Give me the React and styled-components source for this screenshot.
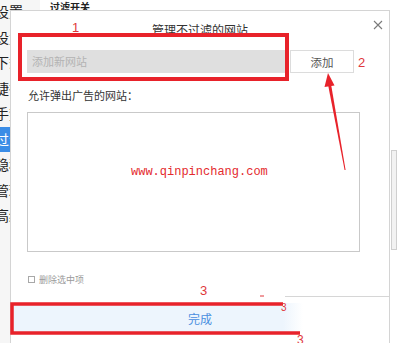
import React from "react";
import styled, { createGlobalStyle } from "styled-components";

const GlobalStyle = createGlobalStyle`
  html, body {
    margin: 0;
    padding: 0;
    background: #ffffff;
    overflow: hidden;
  }
  body {
    font-family: "Noto Sans CJK SC", "Noto Sans", sans-serif;
  }
`;

const Page = styled.div`
  position: relative;
  display: flex;
  width: 400px;
  height: 343px;
  overflow: hidden;
  background: #ffffff;
`;

const Sidebar = styled.ul`
  list-style: none;
  margin: -1px 0 0 -5px;
  padding: 0;
  width: 45px;
  background: #f6f6f6;
`;

const NavItem = styled.li`
  height: 25.5px;
  line-height: 25.5px;
  font-size: 14px;
  white-space: nowrap;
  color: ${(p) => (p.$active ? "#ffffff" : "#222222")};
  background: ${(p) => (p.$active ? "#3b8de6" : "transparent")};
`;

const Main = styled.div`
  flex: 1;
  display: flex;
`;

const MainContent = styled.div`
  flex: 1;
`;

const Heading = styled.div`
  padding: 1px 0 0 10px;
  font-size: 10px;
  font-weight: 700;
  line-height: 12px;
  color: #222222;
`;

const ScrollRail = styled.div`
  width: 10px;
  padding: 150px 0 0 1px;
  box-sizing: border-box;
`;

const ScrollThumb = styled.div`
  width: 6px;
  height: 100px;
  border: 1px solid #cfcfcf;
  background: #f2f2f2;
  box-sizing: border-box;
`;

const Dialog = styled.div`
  position: absolute;
  left: 10px;
  top: 10px;
  width: 380px;
  bottom: -2px;
  display: flex;
  flex-direction: column;
  background: #ffffff;
  border: 1px solid #d4d4d4;
  box-sizing: border-box;
`;

const Header = styled.div`
  display: grid;
  grid-template-columns: 1fr auto 1fr;
  height: 34px;
  align-items: center;
`;

const Title = styled.div`
  grid-column: 2;
  font-size: 12px;
  color: #333333;
  padding-top: 2px;
`;

const CloseButton = styled.button`
  grid-column: 3;
  justify-self: end;
  align-self: start;
  margin: 9px 6px 0 0;
  padding: 0;
  width: 10px;
  height: 10px;
  border: none;
  background: none;
  display: flex;
`;

const InputRow = styled.div`
  display: flex;
  gap: 5px;
  margin: 5px 0 0 16px;
  height: 23px;
`;

const UrlInput = styled.input`
  width: 258px;
  height: 23px;
  box-sizing: border-box;
  border: none;
  background: #dfdfdf;
  padding: 0 0 1px 5px;
  font-family: inherit;
  font-size: 11px;
  color: #333;
  outline: none;
  &::placeholder {
    color: #b3b3b3;
  }
`;

const AddButton = styled.button`
  width: 64px;
  height: 23px;
  box-sizing: border-box;
  border: 1px solid #dcdcdc;
  background: #ffffff;
  font-family: inherit;
  font-size: 11.5px;
  color: #555555;
  padding: 0;
`;

const Label = styled.div`
  margin: 14px 0 0 17px;
  font-size: 11px;
  line-height: 16px;
  color: #333333;
`;

const SiteList = styled.div`
  margin: 9px 0 0 16px;
  width: 333px;
  height: 140px;
  box-sizing: border-box;
  border: 1px solid #c9c9c9;
`;

const DeleteRow = styled.label`
  display: flex;
  align-items: center;
  gap: 4px;
  margin: 21px 0 0 17px;
  height: 12px;
  font-size: 9px;
  color: #9a9a9a;
`;

const Check = styled.span`
  width: 5px;
  height: 5px;
  border: 1px solid #a8a8a8;
`;

const Separator = styled.div`
  margin: 11px 0 0 auto;
  width: 104px;
  height: 1px;
  background: #d6d6d6;
`;

const DoneButton = styled.button`
  margin-top: 6px;
  height: 30px;
  border: none;
  padding: 0;
  font-family: inherit;
  font-size: 12px;
  color: #4a8fe0;
  background: linear-gradient(to right, #edf5fd 0, #edf5fd 272px, #ffffff 292px);
`;

const Marks = styled.svg`
  position: absolute;
  left: 0;
  top: 0;
  pointer-events: none;
`;

const Num = styled.span`
  position: absolute;
  left: ${(p) => p.$x}px;
  top: ${(p) => p.$y}px;
  font-family: "Liberation Sans", Arial, sans-serif;
  font-size: ${(p) => p.$size || 13}px;
  line-height: 1;
  color: #e0373b;
`;

const Watermark = styled.span`
  position: absolute;
  left: 131px;
  top: 164px;
  font-family: "Liberation Mono", monospace;
  font-size: 12px;
  line-height: 16px;
  color: #e42a2e;
`;

const navLabels = ["设置", "设置", "下载", "捷径", "手势", "过滤", "隐私", "管理", "高级"];

export default function App() {
  return (
    <>
      <GlobalStyle />
      <Page>
        <Sidebar>
          {navLabels.map((t, i) => (
            <NavItem key={i} $active={i === 5}>
              {t}
            </NavItem>
          ))}
        </Sidebar>
        <Main>
          <MainContent>
            <Heading>过滤开关</Heading>
          </MainContent>
          <ScrollRail>
            <ScrollThumb />
          </ScrollRail>
        </Main>

        <Dialog>
          <Header>
            <Title>管理不过滤的网站</Title>
            <CloseButton aria-label="关闭">
              <svg width="10" height="10" viewBox="0 0 10 10">
                <path d="M1 1 L9 9 M9 1 L1 9" stroke="#7a7a7a" strokeWidth="1.1" />
              </svg>
            </CloseButton>
          </Header>
          <InputRow>
            <UrlInput placeholder="添加新网站" />
            <AddButton>添加</AddButton>
          </InputRow>
          <Label>允许弹出广告的网站：</Label>
          <SiteList />
          <DeleteRow>
            <Check />
            删除选中项
          </DeleteRow>
          <Separator />
          <DoneButton>完成</DoneButton>
        </Dialog>

        <Marks width="400" height="343" viewBox="0 0 400 343">
          <rect x="20" y="35" width="267" height="44" fill="none" stroke="#e8222a" strokeWidth="4" />
          <path d="M283 304 L12 304 L12 333 L300 333" fill="none" stroke="#e8222a" strokeWidth="3.5" />
          <polygon points="344.6,170 345.6,170 331,84 328,84.4" fill="#e8222a" />
          <polygon points="328,73 324.5,87 334.5,85.5" fill="#e8222a" />
          <path d="M260 296 L264 296" stroke="#e0373b" strokeWidth="1" />
        </Marks>
        <Num $x={72} $y={21}>1</Num>
        <Num $x={358} $y={56}>2</Num>
        <Num $x={200} $y={284}>3</Num>
        <Num $x={281} $y={303} $size={10}>3</Num>
        <Num $x={297} $y={334} $size={12}>3</Num>
        <Watermark>www.qinpinchang.com</Watermark>
      </Page>
    </>
  );
}
